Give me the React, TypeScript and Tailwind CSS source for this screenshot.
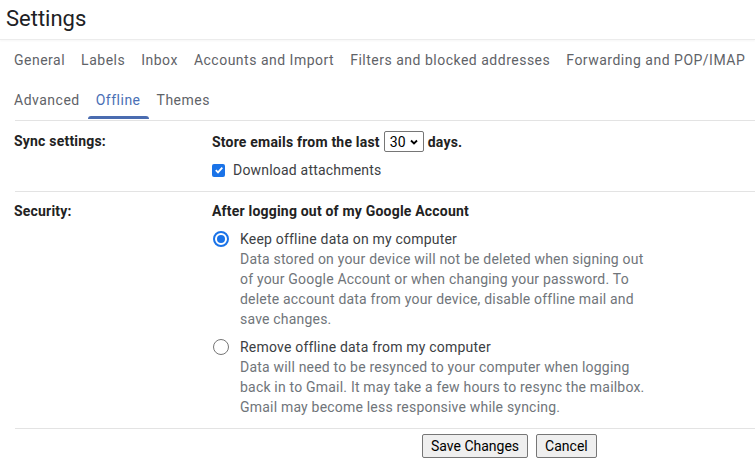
const tabsRow1 = [
  "General",
  "Labels",
  "Inbox",
  "Accounts and Import",
  "Filters and blocked addresses",
  "Forwarding and POP/IMAP",
];
const tabsRow2 = ["Advanced", "Offline", "Themes"];

function Tab({ label, active }: { label: string; active?: boolean }) {
  return (
    <div
      className={
        "relative h-10 px-2 flex items-center text-[14px] tracking-[0.5px] whitespace-nowrap " +
        (active ? "text-[#4a6fb5]" : "text-[#5f6368]")
      }
    >
      {label}
      {active && (
        <div className="absolute left-0 right-0 bottom-[1px] h-[3px] rounded-t-sm bg-[#4a6cb0]" />
      )}
    </div>
  );
}

function Radio({ checked }: { checked?: boolean }) {
  return (
    <div
      className={
        "w-4 h-4 rounded-full flex items-center justify-center shrink-0 border " +
        (checked ? "border-[#1a73e8] border-2" : "border-[#767676]")
      }
    >
      {checked && <div className="w-2 h-2 rounded-full bg-[#1a73e8]" />}
    </div>
  );
}

export default function App() {
  return (
    <div
      className="w-[755px] h-[466px] bg-white overflow-hidden text-[#202124] tracking-[0.2px]"
      style={{ fontFamily: "Roboto, 'Liberation Sans', sans-serif" }}
    >
      <div className="h-10 pl-[6px] pb-[3px] flex items-center text-[22px] tracking-normal text-[#202124] border-b border-[#ececec] shadow-[0_1px_2px_rgba(0,0,0,0.04)]">
        Settings
      </div>

      <div className="pl-[6px]">
        <div className="flex">
          {tabsRow1.map((t) => (
            <Tab key={t} label={t} />
          ))}
        </div>
        <div className="flex">
          {tabsRow2.map((t) => (
            <Tab key={t} label={t} active={t === "Offline"} />
          ))}
        </div>
      </div>

      <div className="ml-[15px] border-t border-[#e3e3e3]">
        {/* Sync settings */}
        <div className="flex pt-[10px] pb-[11px] border-b border-[#e3e3e3]">
          <div className="w-[198px] -ml-[1px] text-[14px] font-bold leading-5 text-[#222]">
            Sync settings:
          </div>
          <div className="flex flex-col">
            <div className="flex items-center text-[14px] font-bold leading-5 text-[#222]">
              <span>Store emails from the last</span>
              <div className="ml-[4px] mr-[4px] h-[21px] w-[40px] border border-[#767676] rounded-[2px] flex items-center justify-between pl-[5px] pr-[4px] font-normal text-black">
                <span>30</span>
                <svg width="10" height="10" viewBox="0 0 10 10">
                  <path d="M2 3.5 L5 6.5 L8 3.5" fill="none" stroke="#000" strokeWidth="1.8" />
                </svg>
              </div>
              <span>days.</span>
            </div>
            <div className="flex items-center mt-[8px] text-[14px] leading-5 text-[#3c4043]">
              <div className="w-[13px] h-[13px] rounded-[2px] bg-[#1a73e8] flex items-center justify-center ml-[0px] mr-[8px]">
                <svg width="10" height="10" viewBox="0 0 10 10">
                  <path d="M1.8 5.2 L4 7.4 L8.3 2.6" fill="none" stroke="#fff" strokeWidth="1.8" />
                </svg>
              </div>
              Download attachments
            </div>
          </div>
        </div>

        {/* Security */}
        <div className="flex pt-[9px] pb-[11px] border-b border-[#e3e3e3]">
          <div className="w-[198px] -ml-[1px] text-[14px] font-bold leading-5 text-[#222]">
            Security:
          </div>
          <div className="flex flex-col w-[440px]">
            <div className="text-[14px] font-bold leading-5 text-[#222]">
              After logging out of my Google Account
            </div>
            <div className="flex mt-[8px]">
              <div className="h-5 flex items-center ml-[1px] mr-[11px]">
                <Radio checked />
              </div>
              <div className="text-[14px] leading-5">
                <div className="text-[#3c4043]">Keep offline data on my computer</div>
                <div className="text-[#70757a] w-[408px]">
                  Data stored on your device will not be deleted when signing out of your Google
                  Account or when changing your password. To delete account data from your
                  device, disable offline mail and save changes.
                </div>
              </div>
            </div>
            <div className="flex mt-[8px]">
              <div className="h-5 flex items-center ml-[1px] mr-[11px]">
                <Radio />
              </div>
              <div className="text-[14px] leading-5">
                <div className="text-[#3c4043]">Remove offline data from my computer</div>
                <div className="text-[#70757a] w-[408px]">
                  Data will need to be resynced to your computer when logging back in to Gmail.
                  It may take a few hours to resync the mailbox. Gmail may become less responsive
                  while syncing.
                </div>
              </div>
            </div>
          </div>
        </div>

        <div className="flex gap-[8px] pl-[407px] pt-[5px] tracking-normal">
          <button className="h-[24px] px-[8px] bg-[#efefef] border border-[#767676] rounded-[2px] text-[14px] text-black">
            Save Changes
          </button>
          <button className="h-[24px] px-[8px] bg-[#efefef] border border-[#767676] rounded-[2px] text-[14px] text-black">
            Cancel
          </button>
        </div>
      </div>
    </div>
  );
}
